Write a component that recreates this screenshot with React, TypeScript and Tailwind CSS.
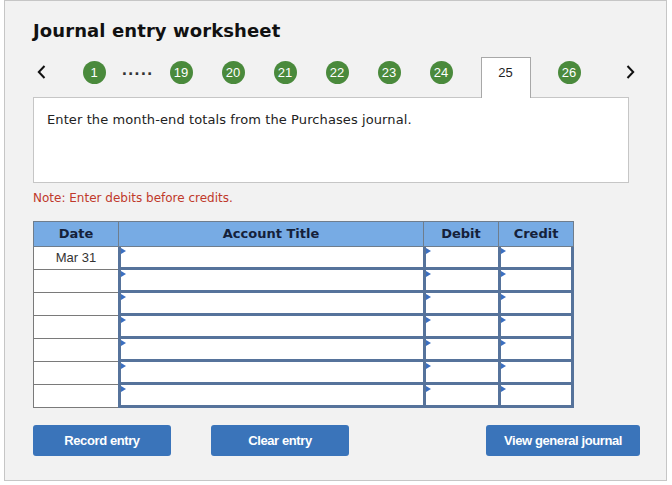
import React from 'react';

const steps = ['19', '20', '21', '22', '23', '24'];

const Circle: React.FC<{ n: string }> = ({ n }) => (
    <div className="mt-[4px] flex h-[23px] w-[23px] items-center justify-center rounded-full bg-[#4a8a3c] text-[13px] text-white" style={{ fontFamily: '"Liberation Sans", Arial, sans-serif' }}>
        {n}
    </div>
);

const InputCell: React.FC<{ w: string; last?: boolean }> = ({ w, last }) => (
    <div className={`${w} relative h-full border-b-[3px] border-l-[3px] border-[#56739b] bg-white ${last ? 'border-r-[3px]' : ''}`}>
        <div className="absolute top-[1px] left-0 h-0 w-0 border-y-[3px] border-l-[5px] border-y-transparent border-l-[#3b6fc0]"></div>
    </div>
);

export default function App() {
    const rows = ['Mar 31', '', '', '', '', '', ''];

    return (
        <div className="h-[485px] w-[672px] bg-white" style={{ fontFamily: '"DejaVu Sans", Verdana, sans-serif' }}>
            <div className="ml-[4px] h-[481px] w-[663px] border border-[#c6c6c6] bg-[#f2f2f2] pl-[28px]">
                <h1 className="mt-[18px] h-[24px] text-[18px] leading-[24px] font-bold tracking-[0.1px] text-[#111]">Journal entry worksheet</h1>

                {/* step navigation */}
                <div className="mt-[14px] flex h-[40px] items-start">
                    <div className="w-[35px] pt-[8px] pl-[4px]">
                        <svg width="9" height="14" viewBox="0 0 9 14">
                            <path d="M7.5 1 L1.8 7 L7.5 13" fill="none" stroke="#111" strokeWidth="2" />
                        </svg>
                    </div>
                    <div className="flex w-[52px] justify-center">
                        <Circle n="1" />
                    </div>
                    <div className="w-[35px] pt-[5px] text-center text-[14px] leading-[16px] font-bold tracking-[1px] text-[#333]">.....</div>
                    {steps.map((s) => (
                        <div key={s} className="flex w-[52px] justify-center">
                            <Circle n={s} />
                        </div>
                    ))}
                    <div className="flex w-[76px] justify-center">
                        <div className="relative z-10 -mr-[1px] h-[41px] w-[50px] border border-b-0 border-[#a8a8a8] bg-white pt-[7px] text-center text-[13px] leading-[16px] text-[#222]" style={{ fontFamily: '"Liberation Sans", Arial, sans-serif' }}>
                            25
                        </div>
                    </div>
                    <div className="flex w-[52px] justify-center">
                        <Circle n="26" />
                    </div>
                    <div className="w-[35px] pt-[8px] pl-[31px]">
                        <svg width="9" height="14" viewBox="0 0 9 14">
                            <path d="M1.5 1 L7.2 7 L1.5 13" fill="none" stroke="#111" strokeWidth="2" />
                        </svg>
                    </div>
                </div>

                {/* instruction box */}
                <div className="h-[86px] w-[596px] border border-[#c6c6c6] bg-white px-[13px] pt-[14px] text-[13px] leading-[16px] tracking-[0.1px] text-[#222]">
                    Enter the month-end totals from the Purchases journal.
                </div>

                <p className="mt-[7px] text-[12px] leading-[16px] text-[#c0392b]">Note: Enter debits before credits.</p>

                {/* journal table */}
                <div className="mt-[15px] w-[541px]">
                    <div className="flex h-[26px] border border-[#6f7d8c] bg-[#77abe4] text-[13px] font-bold text-[#15213a]">
                        <div className="flex w-[85px] items-center justify-center border-r border-[#6f7d8c]">Date</div>
                        <div className="flex w-[305px] items-center justify-center border-r border-[#6f7d8c]">Account Title</div>
                        <div className="flex w-[75px] items-center justify-center border-r border-[#6f7d8c]">Debit</div>
                        <div className="flex w-[74px] items-center justify-center">Credit</div>
                    </div>
                    {rows.map((d, i) => (
                        <div key={i} className="flex h-[23px]">
                            <div className="flex w-[85px] items-center justify-center border-l border-b border-[#7a7a7a] bg-white text-[13px] text-[#333]" style={{ fontFamily: '"Liberation Sans", Arial, sans-serif' }}>
                                {d}
                            </div>
                            <InputCell w="w-[305px]" />
                            <InputCell w="w-[75px]" />
                            <InputCell w="w-[76px]" last />
                        </div>
                    ))}
                </div>

                {/* actions */}
                <div className="mt-[17px] flex w-[607px] text-[13px] font-bold tracking-[-0.4px] text-white" style={{ fontFamily: '"Liberation Sans", Arial, sans-serif' }}>
                    <button className="h-[31px] w-[138px] rounded-[3px] bg-[#3a74ba]">Record entry</button>
                    <button className="ml-[40px] h-[31px] w-[138px] rounded-[3px] bg-[#3a74ba]">Clear entry</button>
                    <button className="ml-auto h-[31px] w-[154px] rounded-[3px] bg-[#3a74ba]">View general journal</button>
                </div>
            </div>
        </div>
    );
}
